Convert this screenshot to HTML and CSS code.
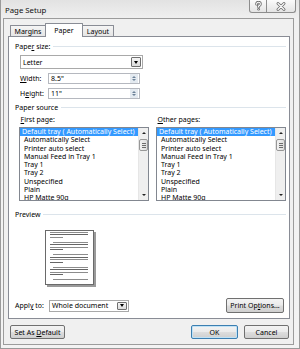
FILE: index.html
```html
<!DOCTYPE html>
<html>
<head>
<meta charset="utf-8">
<title>Page Setup</title>
<link rel="stylesheet" href="styles.css">
</head>
<body>
<div class="window">
  <div class="titlebar">
    <span class="title">Page Setup</span>
    <div class="caption-btns">
      <div class="cbtn help">
        <svg width="9" height="10" viewBox="0 0 9 10">
          <path d="M2.6 3.2 Q2.6 1.2 4.5 1.2 Q6.4 1.2 6.4 3 Q6.4 4.2 4.6 4.9 L4.6 6" fill="none" stroke="#6e6e6e" stroke-width="2.8" stroke-linecap="round"/>
          <circle cx="4.6" cy="8.3" r="1.3" fill="#6e6e6e"/>
          <path d="M2.6 3.2 Q2.6 1.2 4.5 1.2 Q6.4 1.2 6.4 3 Q6.4 4.2 4.6 4.9 L4.6 6" fill="none" stroke="#fff" stroke-width="1.1" stroke-linecap="round"/>
          <circle cx="4.6" cy="8.3" r="0.5" fill="#fff"/>
        </svg>
      </div>
      <div class="cbtn close">
        <svg width="10" height="9" viewBox="0 0 10 9">
          <path d="M2 1.5 L8 7.5 M8 1.5 L2 7.5" stroke="#6e6e6e" stroke-width="2.8" stroke-linecap="round"/>
          <path d="M2 1.5 L8 7.5 M8 1.5 L2 7.5" stroke="#fff" stroke-width="1.1" stroke-linecap="round"/>
        </svg>
      </div>
    </div>
  </div>

  <div class="client">
    <div class="tabs">
      <div class="tab tab-margins"><span>Margins</span></div>
      <div class="tab tab-paper active"><span>Paper</span></div>
      <div class="tab tab-layout"><span>Layout</span></div>
    </div>

    <div class="panel">
      <div class="heading"><span>Pape<u>r</u> size:</span><i class="rule"></i></div>

      <div class="combo size-combo">
        <span class="val">Letter</span>
        <span class="dd"><i class="tri"></i></span>
      </div>

      <div class="field">
        <label><u>W</u>idth:</label>
        <div class="spin"><span class="val">8.5"</span><span class="spinbtn"><i class="up"></i><i class="down"></i></span></div>
      </div>
      <div class="field">
        <label>H<u>e</u>ight:</label>
        <div class="spin"><span class="val">11"</span><span class="spinbtn"><i class="up"></i><i class="down"></i></span></div>
      </div>

      <div class="heading heading-source"><span>Paper source</span><i class="rule"></i></div>

      <div class="sources">
        <div class="col">
          <div class="col-label"><u>F</u>irst page:</div>
          <div class="listbox">
            <div class="items">
              <div class="item sel">Default tray ( Automatically Select)</div>
              <div class="item">Automatically Select</div>
              <div class="item">Printer auto select</div>
              <div class="item">Manual Feed in Tray 1</div>
              <div class="item">Tray 1</div>
              <div class="item">Tray 2</div>
              <div class="item">Unspecified</div>
              <div class="item">Plain</div>
              <div class="item">HP Matte 90g</div>
            </div>
            <div class="scrollbar">
              <span class="sb-arrow"><i class="sb-up"></i></span>
              <span class="thumb"><i></i><i></i><i></i></span>
              <span class="sb-fill"></span>
              <span class="sb-arrow"><i class="sb-down"></i></span>
            </div>
          </div>
        </div>
        <div class="col">
          <div class="col-label"><u>O</u>ther pages:</div>
          <div class="listbox">
            <div class="items">
              <div class="item sel">Default tray ( Automatically Select)</div>
              <div class="item">Automatically Select</div>
              <div class="item">Printer auto select</div>
              <div class="item">Manual Feed in Tray 1</div>
              <div class="item">Tray 1</div>
              <div class="item">Tray 2</div>
              <div class="item">Unspecified</div>
              <div class="item">Plain</div>
              <div class="item">HP Matte 90g</div>
            </div>
            <div class="scrollbar">
              <span class="sb-arrow"><i class="sb-up"></i></span>
              <span class="thumb"><i></i><i></i><i></i></span>
              <span class="sb-fill"></span>
              <span class="sb-arrow"><i class="sb-down"></i></span>
            </div>
          </div>
        </div>
      </div>

      <div class="heading heading-preview"><span>Preview</span><i class="rule"></i></div>

      <svg class="preview" width="51" height="57" viewBox="0 0 51 57">
        <rect x="2" y="2" width="49" height="55" fill="#9a9a9a"/>
        <rect x="0.5" y="0.5" width="48" height="54" fill="#fff" stroke="#6a6a6a"/>
        <g fill="#8c8c8c">
          <rect x="5" y="2" width="38" height="1"/>
          <rect x="5" y="4" width="38" height="1" fill="#666"/>
          <rect x="5" y="7" width="13" height="1"/>
          <rect x="8" y="12" width="35" height="1"/>
          <rect x="5" y="14" width="38" height="1" fill="#666"/>
          <rect x="5" y="17" width="38" height="1"/>
          <rect x="5" y="19" width="13" height="1" fill="#666"/>
          <rect x="8" y="24" width="35" height="1"/>
          <rect x="5" y="27" width="38" height="1" fill="#666"/>
          <rect x="5" y="29" width="38" height="1"/>
          <rect x="5" y="32" width="13" height="1" fill="#666"/>
          <rect x="8" y="37" width="35" height="1"/>
          <rect x="5" y="39" width="38" height="1" fill="#666"/>
          <rect x="5" y="42" width="38" height="1"/>
          <rect x="5" y="44" width="13" height="1" fill="#666"/>
          <rect x="8" y="49" width="35" height="1"/>
        </g>
      </svg>

      <div class="apply">
        <label>Appl<u>y</u> to:</label>
        <div class="combo apply-combo">
          <span class="val">Whole document</span>
          <span class="dd"><i class="tri"></i></span>
        </div>
        <div class="btn print-btn"><span>Print Op<u>t</u>ions...</span></div>
      </div>
    </div>

    <div class="bottom">
      <div class="btn default-btn"><span>Set As <u>D</u>efault</span></div>
      <div class="btn ok-btn"><span>OK</span></div>
      <div class="btn cancel-btn"><span>Cancel</span></div>
    </div>
  </div>
</div>
</body>
</html>
```

FILE: styles.css
```css
* { box-sizing: border-box; }
html, body { margin: 0; padding: 0; }
body {
  width: 300px;
  height: 349px;
  overflow: hidden;
  background: #fff;
  font-family: "Noto Sans", "Liberation Sans", sans-serif;
  font-size: 7px;
  color: #000;
}
u { text-decoration-thickness: 1px; text-underline-offset: 1px; }
i { display: block; }

.window {
  width: 300px;
  height: 349px;
  display: flex;
  flex-direction: column;
  background: linear-gradient(#e2e2e2 0px, #f1f1f1 20px, #f3f3f3 100%);
  border-left: 1px solid #9a9a9a;
  border-right: 1px solid #9a9a9a;
  border-bottom: 1px solid #9a9a9a;
}

.titlebar {
  height: 18px;
  flex: none;
  display: flex;
  justify-content: space-between;
  align-items: flex-start;
  padding-left: 4px;
}
.title {
  font-size: 7.8px;
  line-height: 10px;
  margin-top: 5px;
  color: #111;
}
.caption-btns {
  display: flex;
  height: 13px;
  margin-right: 3px;
  border: 1px solid #8d8d8d;
  border-top: none;
  border-radius: 0 0 3px 3px;
  background: linear-gradient(#fbfbfb, #e4e4e4);
  overflow: hidden;
}
.cbtn {
  display: flex;
  align-items: center;
  justify-content: center;
  height: 12px;
}
.help { width: 17px; border-right: 1px solid #8d8d8d; }
.close { width: 28px; }

.client {
  flex: 1;
  display: flex;
  flex-direction: column;
  margin: 0 5px 3px 2px;
  border: 1px solid #9c9c9c;
  background: #f0f0f0;
  padding: 4px 3px 5px 4px;
}

.tabs {
  flex: none;
  height: 13px;
  display: flex;
  padding-left: 2px;
  position: relative;
  z-index: 1;
}
.tab {
  height: 11px;
  align-self: flex-end;
  display: flex;
  align-items: center;
  justify-content: center;
  border: 1px solid #898c95;
  border-bottom: none;
  border-radius: 1px 1px 0 0;
  background: linear-gradient(#f5f5f5, #e5e5e5);
  margin-left: -1px;
}
.tab-margins { width: 36px; margin-left: 0; }
.tab-paper { width: 38px; }
.tab-layout { width: 32px; }
.tab.active {
  align-self: flex-start;
  height: 14px;
  background: #fff;
  position: relative;
  z-index: 2;
  padding-bottom: 1px;
}

.panel {
  flex: 1;
  display: flex;
  flex-direction: column;
  background: #fff;
  border: 1px solid #898c95;
  padding: 5px 3px 0 6px;
}

.heading {
  height: 9px;
  display: flex;
  align-items: center;
  gap: 3px;
  line-height: 9px;
}
.heading .rule {
  flex: 1;
  height: 1px;
  background: #dce4eb;
}
.heading-source { margin-top: 4px; }
.heading-preview { margin-top: 9px; }

.combo {
  display: flex;
  align-items: center;
  background: #fff;
  border: 1px solid #a9a9a9;
  padding-left: 2px;
}
.combo .val { flex: 1; }
.combo .dd {
  width: 10px;
  align-self: stretch;
  margin: 1px 1px 1px 0;
  border: 1px solid #6f6f6f;
  border-radius: 1px;
  background: linear-gradient(#f4f4f4, #dcdcdc);
  display: flex;
  align-items: center;
  justify-content: center;
}
.tri {
  width: 0;
  height: 0;
  border-left: 2.5px solid transparent;
  border-right: 2.5px solid transparent;
  border-top: 3px solid #000;
}
.size-combo {
  margin: 4px 0 0 5px;
  width: 123px;
  height: 14px;
}

.field {
  display: flex;
  align-items: center;
  margin: 4px 0 0 5px;
  height: 11px;
}
.field label { width: 28px; }
.spin {
  width: 92px;
  height: 11px;
  display: flex;
  align-items: center;
  border: 1px solid #b5b8bf;
  padding-left: 2px;
}
.spin .val { flex: 1; }
.spinbtn {
  width: 8px;
  align-self: stretch;
  margin: 0 1px 0 0;
  background: #e4eaf0;
  display: flex;
  flex-direction: column;
  align-items: center;
  justify-content: center;
  gap: 1px;
}
.spinbtn .up {
  width: 0; height: 0;
  border-left: 2px solid transparent;
  border-right: 2px solid transparent;
  border-bottom: 2px solid #6c8198;
}
.spinbtn .down {
  width: 0; height: 0;
  border-left: 2px solid transparent;
  border-right: 2px solid transparent;
  border-top: 2px solid #6c8198;
}

.sources {
  margin-top: 4px;
  padding-left: 4px;
  display: grid;
  grid-template-columns: 130px 130px;
  column-gap: 7px;
}
.col-label {
  height: 8px;
  line-height: 8px;
  padding-left: 1.5px;
}
.listbox {
  margin-top: 3px;
  height: 74px;
  border: 1px solid #828790;
  display: flex;
  overflow: hidden;
  background: #fff;
}
.items { flex: 1; min-width: 0; }
.item {
  height: 8.25px;
  line-height: 8.25px;
  padding-left: 4px;
  white-space: nowrap;
}
.item.sel {
  background: #3399ff;
  color: #fff;
  padding-left: 2px;
}
.scrollbar {
  width: 10px;
  flex: none;
  display: flex;
  flex-direction: column;
  background: #efefef;
  border-left: 1px solid #e6e6e6;
}
.sb-arrow {
  height: 10px;
  display: flex;
  align-items: center;
  justify-content: center;
}
.sb-up {
  width: 0; height: 0;
  border-left: 2.5px solid transparent;
  border-right: 2.5px solid transparent;
  border-bottom: 2.5px solid #222;
}
.sb-down {
  width: 0; height: 0;
  border-left: 2.5px solid transparent;
  border-right: 2.5px solid transparent;
  border-top: 2.5px solid #222;
}
.thumb {
  height: 12px;
  margin: 1px 0 0 0;
  border: 1px solid #979797;
  border-radius: 2px;
  background: linear-gradient(90deg, #f2f2f2, #dedede);
  display: flex;
  flex-direction: column;
  align-items: center;
  justify-content: center;
  gap: 1px;
}
.thumb i {
  width: 4px;
  height: 1px;
  background: #6c6c6c;
}
.sb-fill { flex: 1; }

.preview {
  display: block;
  margin: 11px 0 0 30px;
  flex: none;
}

.apply {
  margin-top: 11px;
  height: 15px;
  display: flex;
  align-items: center;
}
.apply label { width: 34px; }
.apply-combo {
  width: 80px;
  height: 12px;
}
.print-btn {
  margin-left: auto;
  margin-right: 2px;
  width: 58px;
  height: 15px;
}

.btn {
  display: flex;
  align-items: center;
  justify-content: center;
  border: 1px solid #707070;
  border-radius: 2px;
  background: linear-gradient(#f3f3f3 0%, #ebebeb 48%, #dddddd 52%, #cfcfcf 100%);
  white-space: nowrap;
}

.bottom {
  flex: none;
  margin-top: 6px;
  height: 14px;
  display: flex;
  padding: 0 1px 0 2px;
}
.default-btn { width: 55px; height: 14px; }
.ok-btn {
  width: 47px;
  height: 14px;
  margin-left: auto;
  margin-right: 6px;
  border-color: #3c7fb1;
  box-shadow: inset 0 0 0 1px #c0e2f6;
}
.cancel-btn { width: 45px; height: 14px; }
```
